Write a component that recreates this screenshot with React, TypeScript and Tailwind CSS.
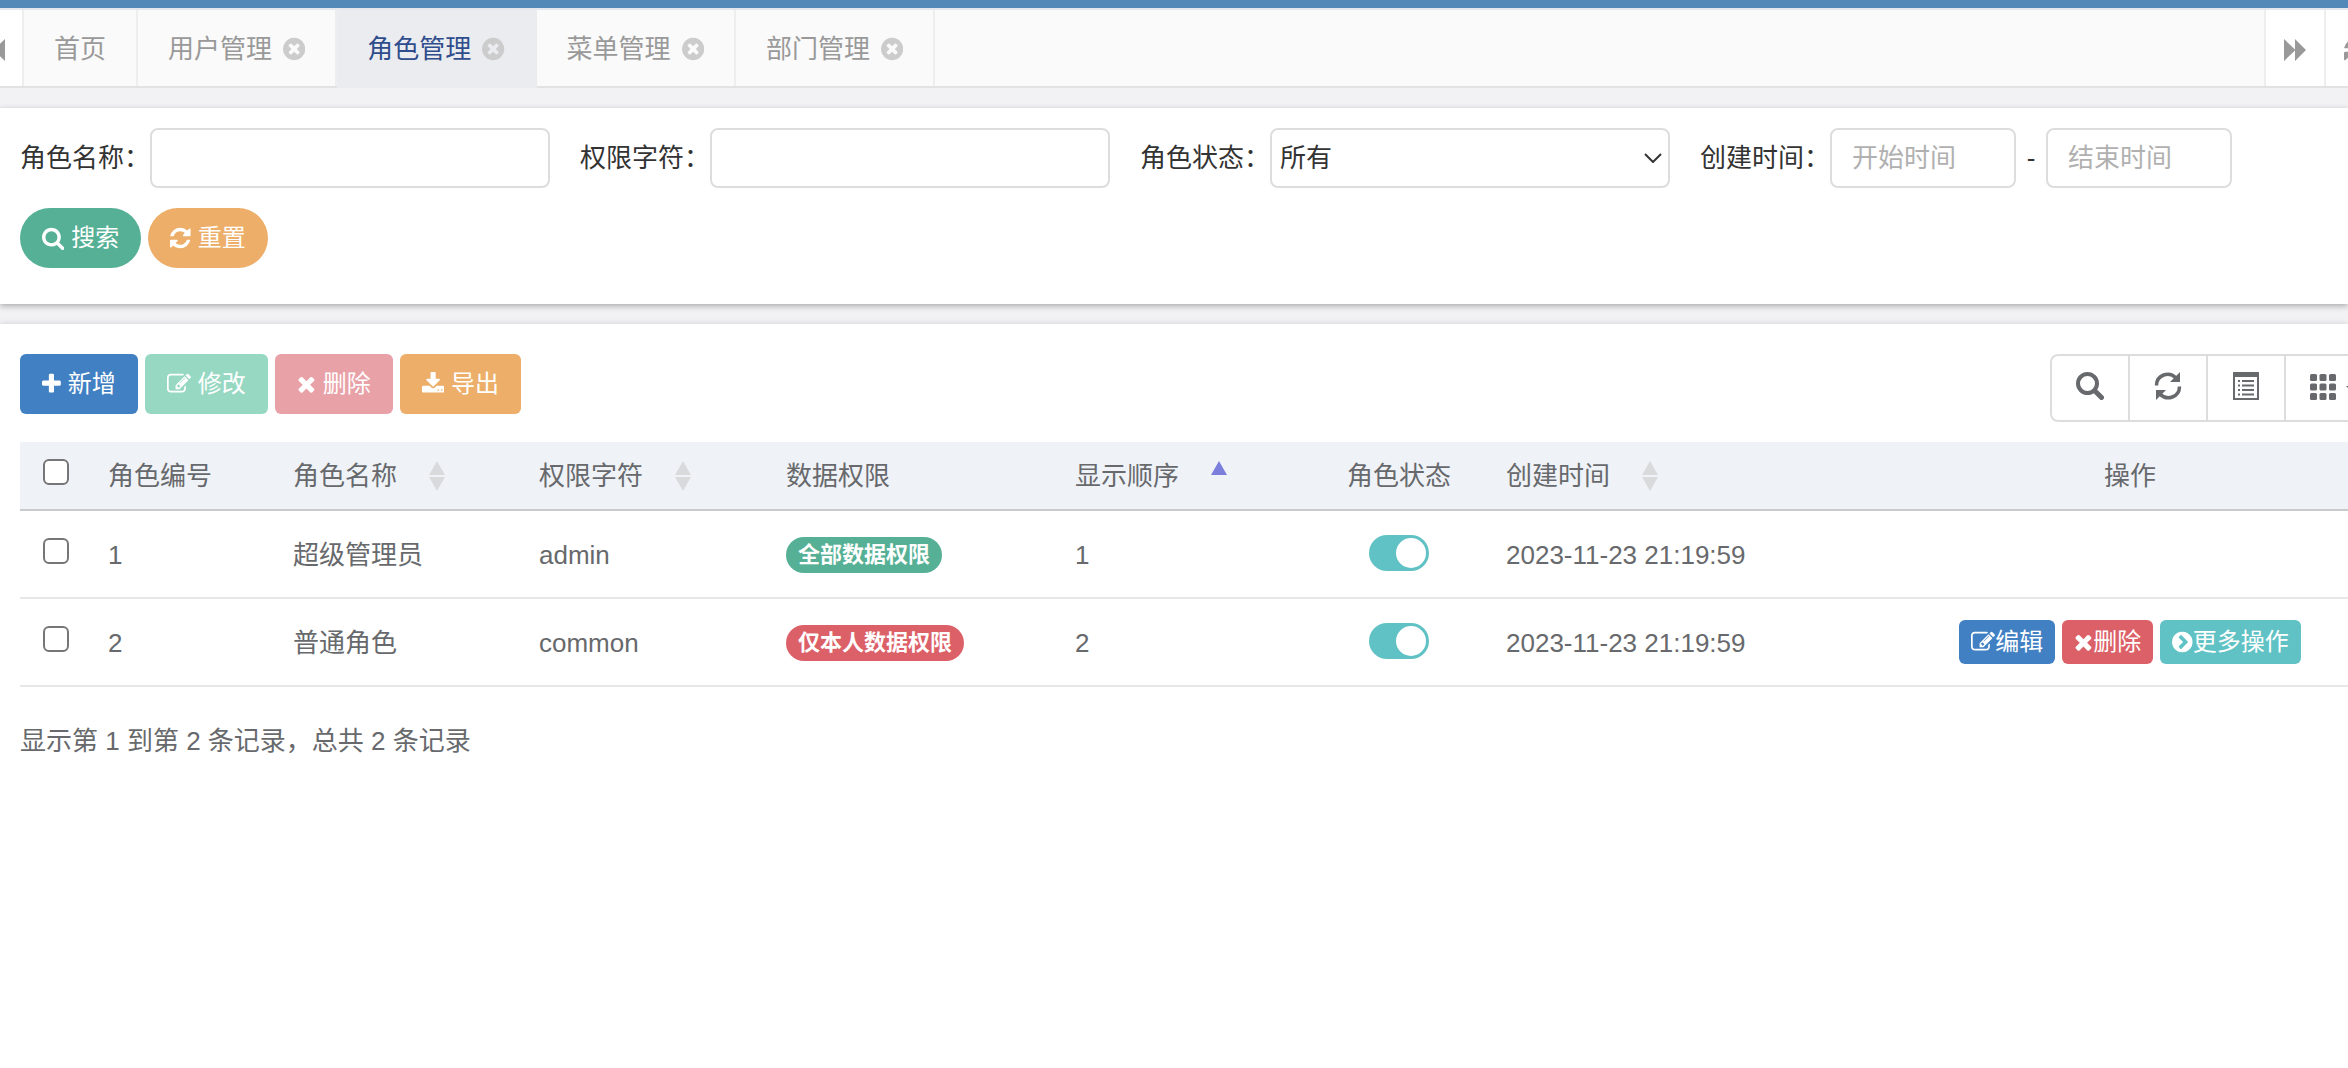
import React, { useState } from "react";
import clsx from "clsx";

// Font Awesome 4 glyphs, [x offset, advance, path] on a 1792 unit em
const glyphs = {
  search: [64, 1664, "M1216 832q0-185-131.5-316.5t-316.5-131.5-316.5 131.5-131.5 316.5 131.5 316.5 316.5 131.5 316.5-131.5 131.5-316.5zm512 832q0 52-38 90t-90 38q-54 0-90-38l-343-342q-179 124-399 124-143 0-273.5-55.5t-225-150-150-225-55.5-273.5 55.5-273.5 150-225 225-150 273.5-55.5 273.5 55.5 225 150 150 225 55.5 273.5q0 220-124 399l343 343q37 37 37 90z"],
  refresh: [128, 1536, "M1639 1056q0 5-1 7-64 268-268 434.5t-478 166.5q-146 0-282.5-55t-243.5-157l-129 129q-19 19-45 19t-45-19-19-45v-448q0-26 19-45t45-19h448q26 0 45 19t19 45-19 45l-137 137q71 66 161 102t187 36q134 0 250-65t186-179q11-17 53-117 8-23 30-23h192q13 0 22.5 9.5t9.5 22.5zm25-800v448q0 26-19 45t-45 19h-448q-26 0-45-19t-19-45 19-45l138-138q-148-137-349-137-134 0-250 65t-186 179q-11 17-53 117-8 23-30 23h-199q-13 0-22.5-9.5t-9.5-22.5v-7q65-268 270-434.5t480-166.5q146 0 284 55.5t245 156.5l130-129q19-19 45-19t45 19 19 45z"],
  plus: [192, 1408, "M1600 736v192q0 40-28 68t-68 28h-416v416q0 40-28 68t-68 28h-192q-40 0-68-28t-28-68v-416h-416q-40 0-68-28t-28-68v-192q0-40 28-68t68-28h416v-416q0-40 28-68t68-28h192q40 0 68 28t28 68v416h416q40 0 68 28t28 68z"],
  edit: [0, 1792, "M888 1184l116-116-152-152-116 116v56h96v96h56zm440-720q-16-16-33 1l-350 350q-17 17-1 33t33-1l350-350q17-17 1-33zm80 594v190q0 119-84.5 203.5t-203.5 84.5h-832q-119 0-203.5-84.5t-84.5-203.5v-832q0-119 84.5-203.5t203.5-84.5h832q63 0 117 25 15 7 18 23 3 17-9 29l-49 49q-14 14-32 8-23-6-45-6h-832q-66 0-113 47t-47 113v832q0 66 47 113t113 47h832q66 0 113-47t47-113v-126q0-13 9-22l64-64q15-15 35-7t20 29zm-96-738l288 288-672 672h-288v-288zm444 132l-92 92-288-288 92-92q28-28 68-28t68 28l152 152q28 28 28 68t-28 68z"],
  remove: [192, 1408, "M1490 1322q0 40-28 68l-136 136q-28 28-68 28t-68-28l-294-294-294 294q-28 28-68 28t-68-28l-136-136q-28-28-28-68t28-68l294-294-294-294q-28-28-28-68t28-68l136-136q28-28 68-28t68 28l294 294 294-294q28-28 68-28t68 28l136 136q28 28 28 68t-28 68l-294 294 294 294q28 28 28 68z"],
  download: [64, 1664, "M1344 1344q0-26-19-45t-45-19-45 19-19 45 19 45 45 19 45-19 19-45zm256 0q0-26-19-45t-45-19-45 19-19 45 19 45 45 19 45-19 19-45zm128-224v320q0 40-28 68t-68 28h-1472q-40 0-68-28t-28-68v-320q0-40 28-68t68-28h465l135 136q58 56 136 56t136-56l136-136h464q40 0 68 28t28 68zm-325-569q17 41-14 70l-448 448q-18 19-45 19t-45-19l-448-448q-31-29-14-70 17-39 59-39h256v-448q0-26 19-45t45-19h256q26 0 45 19t19 45v448h256q42 0 59 39z"],
  close: [128, 1536, "M1277 1122q0-26-19-45l-181-181 181-181q19-19 19-45 0-27-19-46l-90-90q-19-19-46-19-26 0-45 19l-181 181-181-181q-19-19-45-19-27 0-46 19l-90 90q-19 19-19 46 0 26 19 45l181 181-181 181q-19 19-19 45 0 27 19 46l90 90q19 19 46 19 26 0 45-19l181-181 181 181q19 19 45 19 27 0 46-19l90-90q19-19 19-46zm387-226q0 209-103 385.5t-279.5 279.5-385.5 103-385.5-103-279.5-279.5-103-385.5 103-385.5 279.5-279.5 385.5-103 385.5 103 279.5 279.5 103 385.5z"],
  more: [128, 1536, "M845 1395l454-454q19-19 19-45t-19-45l-454-454q-19-19-45-19t-45 19l-102 102q-19 19-19 45t19 45l307 307-307 307q-19 19-19 45t19 45l102 102q19 19 45 19t45-19zm819-499q0 209-103 385.5t-279.5 279.5-385.5 103-385.5-103-279.5-279.5-103-385.5 103-385.5 279.5-279.5 385.5-103 385.5 103 279.5 279.5 103 385.5z"],
} as const;

function Icon({ name, className }: { name: keyof typeof glyphs; className?: string }) {
  const [x, width, d] = glyphs[name];
  return (
    <svg viewBox={`${x} 0 ${width} 1792`} className={clsx("h-[1em] w-auto shrink-0", className)} fill="currentColor" aria-hidden="true">
      <path d={d} />
    </svg>
  );
}

function FastForward({ className }: { className?: string }) {
  return (
    <svg viewBox="0 0 22 22" className={clsx("size-[22px] shrink-0", className)} fill="currentColor" aria-hidden="true">
      <path d="M0 0l11 10.5V0l11 11-11 11V11.500L0 22z" />
    </svg>
  );
}

function SortIcon({ active }: { active?: boolean }) {
  return (
    <svg viewBox="0 0 16 30" className="h-[30px] w-4" fill={active ? "#7b7edb" : "#d9dadb"} aria-hidden="true">
      <path d="M8 0l8 14H0z" />
      {!active && <path d="M0 16h16L8 30z" />}
    </svg>
  );
}

const tabs = ["用户管理", "角色管理", "菜单管理", "部门管理"];

const columns = [
  { title: "角色编号", width: "w-[185px]" },
  { title: "角色名称", width: "w-[246px]", sort: true },
  { title: "权限字符", width: "w-[247px]", sort: true },
  { title: "数据权限", width: "w-[289px]" },
  { title: "显示顺序", width: "w-[249px]", sort: true, active: true },
  { title: "角色状态", width: "w-[182px]", center: true },
  { title: "创建时间", width: "w-[422px]", sort: true },
  { title: "操作", width: "", center: true },
];

const roles = [
  { id: 1, name: "超级管理员", key: "admin", scope: "全部数据权限", color: "bg-[#55b095]", sort: 1, time: "2023-11-23 21:19:59" },
  { id: 2, name: "普通角色", key: "common", scope: "仅本人数据权限", color: "bg-[#dc6067]", sort: 2, time: "2023-11-23 21:19:59", editable: true },
];

const control = "h-[60px] rounded-lg border-2 border-[#dddddd] bg-white text-[#333333] placeholder:text-[#b0b0b0] placeholder:opacity-100";
const button = "flex h-[60px] items-center gap-[7px] px-[22px] text-2xl text-white";
const action = "flex h-11 items-center rounded-md px-3 text-2xl text-white";
const checkbox = "block size-[26px] appearance-none rounded-md border-2 border-[#767676] bg-white checked:bg-[#4180c3]";
const tool = "flex w-[78px] shrink-0 justify-center border-r-2 border-[#dddddd] pt-4";
const cell = "px-4 pt-[2px]";

function TabBar() {
  const [current, setCurrent] = useState("角色管理");
  return (
    <nav className="flex h-20 border-y-2 border-t-[#e4e8ee] border-b-[#e2e2e2] bg-[#fafafa] text-[#999999]">
      <button aria-label="向左" className="flex w-6 items-center justify-end overflow-hidden border-r-2 border-[#eeeeee] bg-white pt-1 pr-[17px]">
        <FastForward className="rotate-180" />
      </button>
      <button className="border-r-2 border-[#eeeeee] px-[30px] pt-[2px]">首页</button>
      {tabs.map((tab) => (
        <button
          key={tab}
          onClick={() => setCurrent(tab)}
          className={clsx(
            "flex items-center gap-[11px] border-r-2 px-[30px] pt-[2px]",
            tab === current ? "-mb-[2px] border-[#ebecf0] bg-[#ebecf0] pb-[2px] text-[#2f4d8c]" : "border-[#eeeeee]"
          )}
        >
          {tab}
          <Icon name="close" className="text-[#cccccc]" />
        </button>
      ))}
      <div className="ml-auto flex w-[84px] overflow-hidden bg-white">
        <button aria-label="向右" className="flex w-[62px] shrink-0 items-center justify-center border-x-2 border-[#eeeeee] pt-1">
          <FastForward />
        </button>
        <button aria-label="刷新" className="flex shrink-0 items-center pt-1 pl-[18px]">
          <Icon name="refresh" />
        </button>
      </div>
    </nav>
  );
}

function SearchForm() {
  return (
    <form className="bg-white px-5 pt-5 pb-9 shadow-[0_2px_6px_rgba(0,0,0,0.3)]" onSubmit={(e) => e.preventDefault()}>
      <div className="flex flex-wrap items-center gap-x-[30px] gap-y-5 text-[#333333]">
        <label className="flex items-center">
          角色名称：
          <input type="text" className={clsx(control, "w-[400px] px-5")} />
        </label>
        <label className="flex items-center">
          权限字符：
          <input type="text" className={clsx(control, "w-[400px] px-5")} />
        </label>
        <label className="flex items-center">
          角色状态：
          <span className="relative">
            <select className={clsx(control, "block w-[400px] appearance-none px-2")}>
              <option>所有</option>
              <option>正常</option>
              <option>停用</option>
            </select>
            <svg viewBox="0 0 18 10" className="pointer-events-none absolute top-[25px] right-2 h-[10px] w-[18px]" fill="none" stroke="#333333" strokeWidth="2" aria-hidden="true">
              <path d="M1 1l8 8 8-8" />
            </svg>
          </span>
        </label>
        <div className="flex items-center">
          <label htmlFor="startTime">创建时间：</label>
          <input id="startTime" type="text" placeholder="开始时间" className={clsx(control, "w-[186px] px-5")} />
          <span className="w-[30px] text-center">-</span>
          <input type="text" aria-label="结束时间" placeholder="结束时间" className={clsx(control, "w-[186px] px-5")} />
        </div>
      </div>
      <div className="mt-5 flex gap-[7px]">
        <button type="submit" className={clsx(button, "rounded-full bg-[#55b095]")}>
          <Icon name="search" />搜索
        </button>
        <button type="reset" className={clsx(button, "rounded-full bg-[#ecae68]")}>
          <Icon name="refresh" />重置
        </button>
      </div>
    </form>
  );
}

function Toolbar() {
  return (
    <div className="flex items-start justify-between">
      <div className="flex gap-[7px]">
        <button className={clsx(button, "rounded-md bg-[#4180c3]")}>
          <Icon name="plus" />新增
        </button>
        <button disabled className={clsx(button, "rounded-md bg-[#97d8c3]")}>
          <Icon name="edit" />修改
        </button>
        <button disabled className={clsx(button, "rounded-md bg-[#e9a1a8]")}>
          <Icon name="remove" />删除
        </button>
        <button className={clsx(button, "rounded-md bg-[#ecae68]")}>
          <Icon name="download" />导出
        </button>
      </div>
      <div className="flex h-[68px] w-[298px] overflow-hidden rounded-l-lg border-2 border-r-0 border-[#dddddd] text-[#67696c]">
        <button aria-label="搜索" className={tool}>
          <svg viewBox="0 0 28 28" className="size-7" fill="none" stroke="currentColor" aria-hidden="true">
            <circle cx="11.500" cy="11.500" r="9.500" strokeWidth="4" />
            <path d="M19 19l6.500 6.500" strokeWidth="5" strokeLinecap="round" />
          </svg>
        </button>
        <button aria-label="刷新" className={tool}>
          <svg viewBox="0 0 28 28" className="size-7" fill="none" stroke="currentColor" strokeWidth="3.500" aria-hidden="true">
            <path d="M2.500 13.500C2.500 3 15-1.500 22 6M25.500 14.500C25.500 25 13 29.500 6 22" />
            <path d="M26 0v10H16zM2 28V18h10z" fill="currentColor" stroke="none" />
          </svg>
        </button>
        <button aria-label="切换视图" className={tool}>
          <svg viewBox="0 0 28 28" className="size-7" fill="none" stroke="currentColor" strokeWidth="2" aria-hidden="true">
            <path d="M2 3v24h24V3" />
            <path d="M1 0h26v5H1z" fill="currentColor" stroke="none" />
            <path d="M6 9h2M6 13.500h2M6 18h2M6 22.500h2M10 9h12M10 13.500h12M10 18h12M10 22.500h12" />
          </svg>
        </button>
        <button aria-label="列" className="flex shrink-0 gap-[10px] pt-[18px] pl-6">
          <svg viewBox="0 0 26 26" className="size-[26px]" fill="currentColor" aria-hidden="true">
            {[0, 9.5, 19].map((y) => [0, 9.5, 19].map((x) => <rect key={`${x}-${y}`} x={x} y={y} width="7" height="7" rx="1.500" />))}
          </svg>
          <svg viewBox="0 0 16 8" className="mt-3 h-2 w-4" fill="currentColor" aria-hidden="true">
            <path d="M0 0h16L8 8z" />
          </svg>
        </button>
      </div>
    </div>
  );
}

function RoleTable() {
  return (
    <table className="mt-5 w-full table-fixed text-left">
      <thead>
        <tr className="h-[68px] border-b-2 border-[#c8cacd] bg-[#eff3f8]">
          <th className="w-[72px] pb-2 pl-[23px]">
            <input type="checkbox" aria-label="全选" className={checkbox} />
          </th>
          {columns.map((col) => (
            <th key={col.title} className={clsx("px-4 font-normal", col.width)}>
              <div className={clsx("flex items-center gap-8", col.center && "justify-center")}>
                {col.title}
                {col.sort && <SortIcon active={col.active} />}
              </div>
            </th>
          ))}
        </tr>
      </thead>
      <tbody>
        {roles.map((role) => (
          <tr key={role.id} className="h-[88px] border-b-2 border-[#e7e7e7]">
            <td className="pb-[6px] pl-[23px]">
              <input type="checkbox" aria-label={role.name} className={checkbox} />
            </td>
            <td className={cell}>{role.id}</td>
            <td className={cell}>{role.name}</td>
            <td className={cell}>{role.key}</td>
            <td className={cell}>
              <span className={clsx("flex h-9 w-fit items-center rounded-full px-3 text-[22px] font-bold text-white", role.color)}>{role.scope}</span>
            </td>
            <td className={cell}>{role.sort}</td>
            <td className="pb-[2px]">
              <label className="relative mx-auto block h-9 w-[60px]">
                <input type="checkbox" role="switch" defaultChecked aria-label="角色状态" className="peer block h-9 w-[60px] appearance-none rounded-full bg-[#cccccc] checked:bg-[#60c2c4]" />
                <span className="absolute top-[3px] left-[3px] size-[30px] rounded-full bg-white peer-checked:left-[27px]" />
              </label>
            </td>
            <td className={cell}>{role.time}</td>
            <td>
              {role.editable && (
                <div className="flex justify-center gap-[7px]">
                  <button className={clsx(action, "bg-[#4180c3]")}><Icon name="edit" />编辑</button>
                  <button className={clsx(action, "bg-[#dc6067]")}><Icon name="remove" />删除</button>
                  <button className={clsx(action, "bg-[#60c2c4]")}><Icon name="more" />更多操作</button>
                </div>
              )}
            </td>
          </tr>
        ))}
      </tbody>
    </table>
  );
}

export default function App() {
  return (
    <div className="flex min-h-screen flex-col overflow-x-hidden bg-[#f2f2f4] font-['Liberation_Sans','Noto_Sans_CJK_SC',sans-serif] text-[26px] leading-9 text-[#67696c]">
      <div className="h-2 bg-[#5289b8]" />
      <TabBar />
      <main className="flex grow flex-col gap-5 pt-5">
        <SearchForm />
        <section className="grow bg-white pt-[30px] pl-5 shadow-[0_0_6px_rgba(0,0,0,0.15)]">
          <Toolbar />
          <RoleTable />
          <p className="mt-9">显示第 1 到第 2 条记录，总共 2 条记录</p>
        </section>
      </main>
    </div>
  );
}
